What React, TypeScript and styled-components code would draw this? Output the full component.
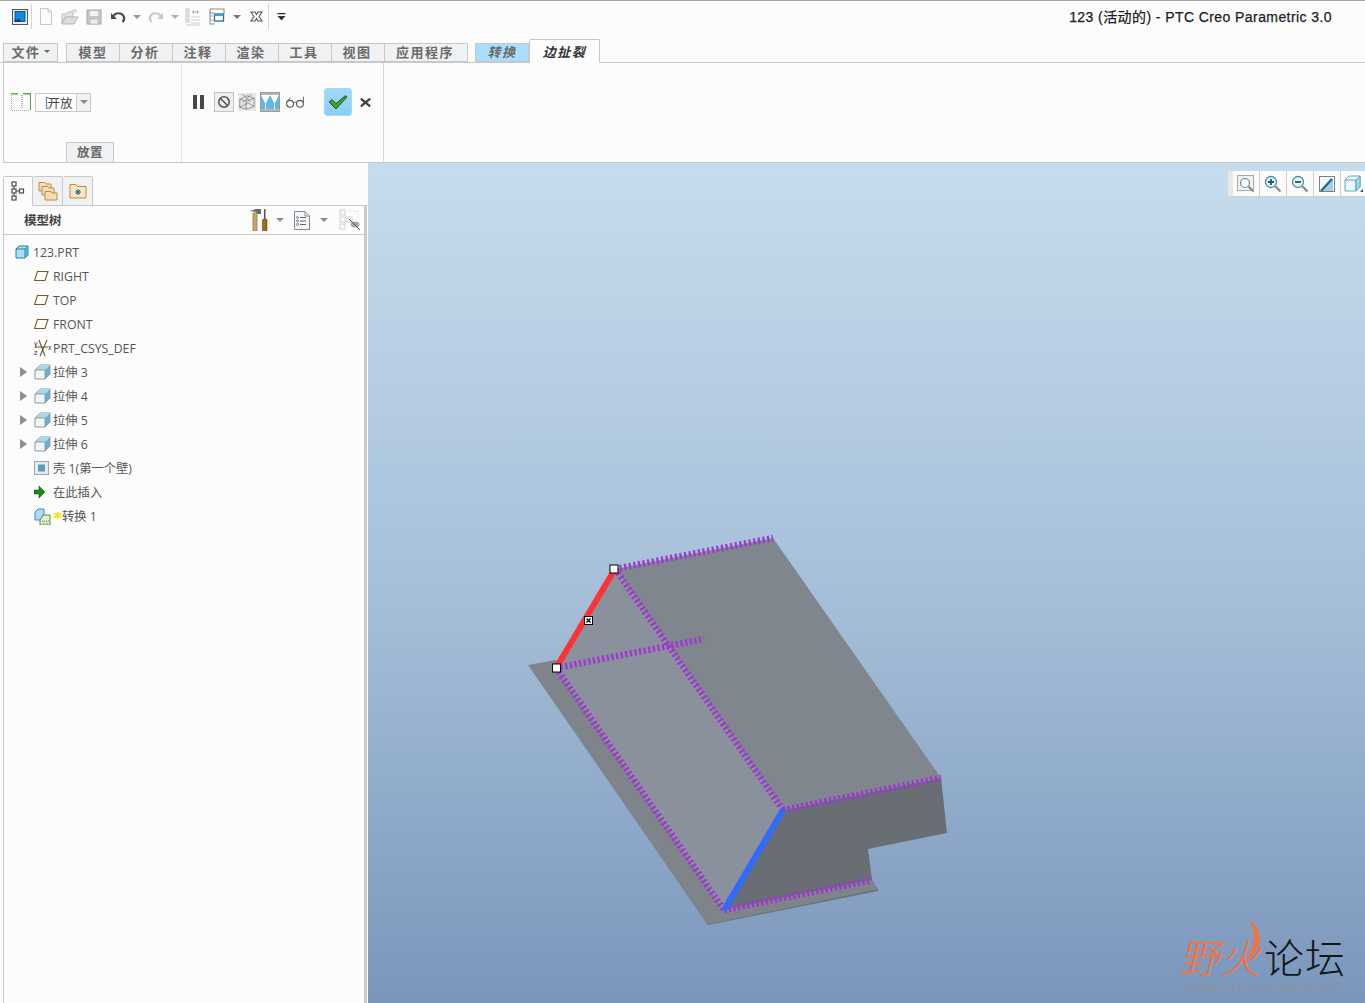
import React from "react";
import styled, { createGlobalStyle } from "styled-components";

const CJK = `"Liberation Sans", "Noto Sans CJK SC", sans-serif`;
const TREE = `"Open Sans", "Noto Sans CJK SC", sans-serif`;

const GlobalStyle = createGlobalStyle`
  html, body { margin: 0; padding: 0; background: #fcfcfc; }
  * { box-sizing: border-box; }
`;

const Page = styled.div`
  width: 1365px;
  height: 1003px;
  overflow: hidden;
  display: flex;
  flex-direction: column;
  background: #fcfcfc;
  font-family: ${CJK};
`;

/* quick access bar */
const QuickBar = styled.div`
  height: 43px;
  flex: none;
  border-top: 1px solid #a4a4a4;
  padding: 3px 33px 14px 8px;
  display: flex;
  align-items: center;
`;
const Slot = styled.div<{ $w: number }>`
  width: ${(p) => p.$w}px;
  height: 25px;
  flex: none;
  display: flex;
  align-items: center;
  justify-content: center;
`;
const BarSep = styled.div`
  width: 1px;
  height: 25px;
  flex: none;
  background: #d4d4d4;
`;
const Title = styled.div`
  margin-left: auto;
  padding-bottom: 2px;
  font-size: 14px;
  letter-spacing: 0.42px;
  color: #1c1c1c;
  -webkit-text-stroke: 0.25px #1c1c1c;
  white-space: nowrap;
`;
const Caret = styled.span<{ $c?: string; $s?: number }>`
  display: block;
  width: 0;
  height: 0;
  border-left: ${(p) => p.$s ?? 4}px solid transparent;
  border-right: ${(p) => p.$s ?? 4}px solid transparent;
  border-top: ${(p) => p.$s ?? 4}px solid ${(p) => p.$c ?? "#9a9a9a"};
`;

/* ribbon tabs */
const TabRow = styled.div`
  height: 20px;
  flex: none;
  display: flex;
  align-items: flex-end;
  padding-left: 3px;
  border-bottom: 1px solid #c8c8c8;
`;
const Tab = styled.div<{ $w: number; $gap?: number; $kind?: "blue" | "active"; $first?: boolean }>`
  width: ${(p) => p.$w}px;
  height: ${(p) => (p.$kind === "active" ? 24 : 19)}px;
  flex: none;
  margin-left: ${(p) => p.$gap ?? 0}px;
  margin-bottom: ${(p) => (p.$kind === "active" ? -1 : 0)}px;
  padding-bottom: ${(p) => (p.$kind === "active" ? 0 : 2)}px;
  padding-right: ${(p) => (p.$gap || p.$first || p.$kind ? 0 : 2)}px;
  position: relative;
  display: flex;
  align-items: center;
  justify-content: center;
  gap: 3px;
  font-size: 13px;
  font-weight: 700;
  letter-spacing: 1.5px;
  font-style: ${(p) => (p.$kind ? "italic" : "normal")};
  color: ${(p) => (p.$kind === "active" ? "#333" : "#6a6a6a")};
  background: ${(p) =>
    p.$kind === "active" ? "#fdfdfd" : p.$kind === "blue" ? "#a9deff" : "#eff1f3"};
  border: 1px solid #c8c8c8;
  border-bottom: ${(p) => (p.$kind === "active" ? "none" : "1px solid #c8c8c8")};
  border-left-width: ${(p) => (p.$gap || p.$first || p.$kind === "active" ? 1 : 0)}px;
  border-radius: ${(p) => (p.$kind === "active" ? "2px 2px 0 0" : "0")};
`;

/* ribbon */
const Ribbon = styled.div`
  height: 100px;
  flex: none;
  margin-left: 3px;
  display: flex;
  border-left: 1px solid #c8c8c8;
  border-bottom: 1px solid #c8c8c8;
`;
const Group = styled.div<{ $w: number; $pad: number; $rule?: boolean }>`
  width: ${(p) => p.$w}px;
  flex: none;
  padding: 25px 0 0 ${(p) => p.$pad}px;
  display: flex;
  flex-direction: column;
  border-right: 1px solid ${(p) => (p.$rule ? "#d6d6d6" : "#e4e4e4")};
`;
const GroupRow = styled.div`
  height: 28px;
  display: flex;
  align-items: center;
`;
const Combo = styled.div`
  width: 56px;
  height: 19px;
  margin-left: 4px;
  display: flex;
  border: 1px solid #c8c8c8;
  background: #fff;
`;
const ComboText = styled.div`
  flex: 1;
  display: flex;
  align-items: center;
  padding-left: 9px;
  font-size: 12.5px;
  color: #444;
  font-weight: 400;
  white-space: nowrap;
`;
const ComboBracket = styled.span`
  color: #5a7a96;
  margin-right: -1px;
`;
const ComboArrow = styled.div`
  width: 14px;
  display: flex;
  align-items: center;
  justify-content: center;
  background: #eff1f3;
  border-left: 1px solid #c8c8c8;
`;
const PlaceTab = styled.div`
  width: 48px;
  height: 20px;
  margin: auto 0 0 55px;
  padding-bottom: 2px;
  display: flex;
  align-items: center;
  justify-content: center;
  font-size: 12.5px;
  font-weight: 700;
  letter-spacing: 0.5px;
  color: #666;
  background: #eff1f3;
  border: 1px solid #c8c8c8;
  border-bottom: none;
`;
const ToolBtn = styled.div<{ $w?: number; $gap?: number; $state?: "boxed" | "on" }>`
  width: ${(p) => p.$w ?? 20}px;
  height: 20px;
  margin-left: ${(p) => p.$gap ?? 3}px;
  flex: none;
  display: flex;
  align-items: center;
  justify-content: center;
  background: ${(p) => (p.$state === "on" ? "#b4b4b4" : p.$state === "boxed" ? "#efefef" : "transparent")};
  border: 1px solid ${(p) => (p.$state === "on" ? "#9c9c9c" : p.$state === "boxed" ? "#c4c4c4" : "transparent")};
`;
const PauseBar = styled.div`
  display: flex;
  gap: 3px;
  width: 11px;
  height: 14px;
  flex: none;
  &::before,
  &::after {
    content: "";
    width: 4px;
    background: #474747;
  }
`;
const ConfirmBtn = styled.div`
  width: 28px;
  height: 28px;
  margin-left: 19px;
  flex: none;
  display: flex;
  align-items: center;
  justify-content: center;
  background: linear-gradient(#a2d9fb, #8bcdf8);
  border: 1px solid #a9d8f5;
  border-radius: 3px;
`;

/* main area */
const Body = styled.div`
  flex: 1;
  min-height: 0;
  display: flex;
`;
const Side = styled.div`
  width: 368px;
  flex: none;
  padding-left: 3px;
  padding-right: 1px;
  display: flex;
  flex-direction: column;
`;
const SideTabs = styled.div`
  height: 43px;
  flex: none;
  display: flex;
  align-items: flex-end;
  margin-bottom: -1px;
`;
const SideTab = styled.div<{ $active?: boolean }>`
  width: 30px;
  height: 30px;
  display: flex;
  align-items: center;
  justify-content: center;
  position: relative;
  z-index: ${(p) => (p.$active ? 1 : 0)};
  background: ${(p) => (p.$active ? "#fdfdfd" : "#eff1f3")};
  border: 1px solid #c8c8c8;
  border-left-width: ${(p) => (p.$active ? 1 : 0)}px;
  border-bottom-color: ${(p) => (p.$active ? "#fdfdfd" : "#c8c8c8")};
  border-radius: 2px 2px 0 0;
`;
const TreePanel = styled.div`
  flex: 1;
  display: flex;
  flex-direction: column;
  border-left: 1px solid #c8c8c8;
  border-right: 3px solid #cacaca;
  border-top: 1px solid #c8c8c8;
`;
const TreeHeader = styled.div`
  height: 29px;
  flex: none;
  display: flex;
  align-items: center;
  padding: 0 0 0 20px;
  border-bottom: 1px solid #c8c8c8;
`;
const TreeTitle = styled.div`
  font-size: 12.5px;
  font-weight: 700;
  color: #444;
  margin-right: auto;
  padding-bottom: 2px;
`;
const HeaderTool = styled.div<{ $w: number }>`
  width: ${(p) => p.$w}px;
  height: 24px;
  flex: none;
  display: flex;
  align-items: center;
  justify-content: center;
`;
const TreeList = styled.div`
  padding-top: 5px;
  display: flex;
  flex-direction: column;
`;
const Row = styled.div<{ $indent: number }>`
  height: 24px;
  display: flex;
  align-items: center;
  padding-left: ${(p) => p.$indent}px;
  font-family: ${TREE};
  font-size: 12.3px;
  color: #555;
  white-space: nowrap;
`;
const Expander = styled.div<{ $show: boolean }>`
  width: 14px;
  flex: none;
  &::before {
    content: "";
    display: ${(p) => (p.$show ? "block" : "none")};
    width: 0;
    height: 0;
    border-top: 5px solid transparent;
    border-bottom: 5px solid transparent;
    border-left: 7px solid #8e8e8e;
  }
`;
const RowIcon = styled.div<{ $w: number }>`
  width: ${(p) => p.$w}px;
  height: 18px;
  flex: none;
  display: flex;
  align-items: center;
`;

/* graphics window */
const Viewport = styled.div`
  flex: 1;
  position: relative;
  overflow: hidden;
  background: linear-gradient(#c7dcec 0%, #a7c0da 50%, #7b96bc 100%);
`;
const ModelSvg = styled.svg`
  display: block;
  width: 100%;
  height: 100%;
`;
const ViewTools = styled.div`
  position: absolute;
  top: 8px;
  left: 860px;
  height: 26px;
  display: flex;
  background: #fbfbfb;
  border-left: 5px solid #e8e8e8;
  border-bottom: 1px solid #cfcfcf;
`;
const ViewTool = styled.div`
  width: 27px;
  display: flex;
  align-items: center;
  justify-content: center;
  border-right: 1px solid #cfcfcf;
`;
const Mark = styled.div`
  position: absolute;
  left: 811px;
  top: 770px;
  width: 178px;
`;
const MarkTitle = styled.div`
  display: flex;
  font-family: "Noto Sans CJK SC", sans-serif;
  font-size: 40px;
  line-height: 46px;
  font-weight: 300;
  height: 46px;
`;
const MarkHot = styled.span`
  color: #f8703a;
  font-style: italic;
  font-weight: 300;
  letter-spacing: 1px;
  margin-right: 3px;
`;
const MarkCool = styled.span`
  color: #151515;
  font-weight: 300;
  letter-spacing: 1px;
`;
const MarkUrl = styled.div`
  font-size: 14.6px;
  font-style: italic;
  letter-spacing: 1.5px;
  color: #8c93a0;
  white-space: nowrap;
  padding-left: 3px;
`;
const Flame = styled.svg`
  position: absolute;
  left: 61px;
  top: -15px;
`;

/* icons */
const Ic = ({ w = 16, h = 16, children }: { w?: number; h?: number; children: React.ReactNode }) => (
  <svg width={w} height={h} viewBox={`0 0 ${w} ${h}`} fill="none">
    {children}
  </svg>
);

const AppIcon = () => (
  <Ic>
    <rect x="0.5" y="0.5" width="15" height="15" fill="#ececec" stroke="#555" />
    <rect x="3" y="2.500" width="10" height="10" fill="#0a8ae0" stroke="#0c3f66" strokeWidth="0.800" />
    <rect x="2.500" y="10.500" width="6" height="2.500" fill="#123f60" />
  </Ic>
);
const NewIcon = () => (
  <Ic h={17}>
    <path d="M2.5 .5H10L13.5 4V16.5H2.5Z" fill="#fbfbfb" stroke="#c8c8c8" />
    <path d="M10 .5V4H13.5" stroke="#c8c8c8" />
  </Ic>
);
const OpenIcon = () => (
  <Ic w={18}>
    <path d="M1 5H6L7 3H12V8H4L1 15Z" fill="#e6e6e6" stroke="#bdbdbd" />
    <path d="M1 15L4 8H17L13 15Z" fill="#dcdcdc" stroke="#b8b8b8" />
    <path d="M10 3C11 1 13 1 15 2M15 2L13 .5M15 2L13.5 4" stroke="#bcbcbc" />
  </Ic>
);
const SaveIcon = () => (
  <Ic>
    <rect x="1" y="1" width="14" height="14" fill="#c8c8c8" stroke="#a8a8a8" />
    <rect x="4" y="2" width="8" height="5" fill="#f2f2f2" />
    <rect x="4" y="10" width="8" height="5" fill="#eee" stroke="#a8a8a8" strokeWidth="0.6" />
  </Ic>
);
const UndoIcon = () => (
  <Ic>
    <path d="M3 8C5 3 12 3 14 8C14.5 10 13.5 12 12.5 13" stroke="#4a4a4a" strokeWidth="2.2" />
    <path d="M1 4V10H7Z" fill="#4a4a4a" />
  </Ic>
);
const RedoIcon = () => (
  <Ic>
    <path d="M13 8C11 3 4 3 2 8C1.500 10 2.500 12 3.500 13" stroke="#c8c8c8" strokeWidth="2.2" />
    <path d="M15 4V10H9Z" fill="#c8c8c8" />
  </Ic>
);
const RegenIcon = () => (
  <Ic h={18}>
    <g stroke="#c4c4c4" fill="#f4f4f4">
      <rect x="1" y="1" width="3" height="3" />
      <rect x="1" y="6" width="3" height="3" />
      <rect x="1" y="11" width="3" height="3" />
    </g>
    <path d="M6 12H15M6 15H15M1 17H15M6 9H15" stroke="#cfcfcf" />
    <path d="M7 4L9 2V6ZM14 4L12 2V6Z" fill="#a6a6a6" />
    <path d="M9 4H12" stroke="#a6a6a6" />
  </Ic>
);
const WindowsIcon = () => (
  <Ic h={17}>
    <path d="M1 1H15V6M1 1V16H6M1 5H5" stroke="#8c8c8c" strokeWidth="1.1" />
    <rect x="5.500" y="6" width="9" height="7" fill="#fff" stroke="#2a6a94" strokeWidth="1.300" />
    <path d="M5.500 7H14.500" stroke="#4aa0d4" strokeWidth="2" />
    <path d="M2 8H4M2 12H4" stroke="#9a9a9a" />
  </Ic>
);
const CloseWinIcon = () => (
  <Ic w={13} h={11}>
    <path d="M1 1H5L6.500 3.500L8 1H12L9 5.500L12 10H8L6.500 7.500L5 10H1L4 5.500Z" fill="#fff" stroke="#555" strokeWidth="1.100" />
  </Ic>
);
const MoreIcon = () => (
  <Ic w={9} h={8}>
    <rect x="0.500" y="0" width="8" height="1.300" fill="#333" />
    <path d="M0.500 3H8.500L4.500 7.500Z" fill="#333" />
  </Ic>
);
const SheetIcon = () => (
  <Ic w={20} h={18}>
    <path d="M.5 2V17.500H19" stroke="#aaa" strokeDasharray="1 1" />
    <path d="M0 .7H7M12 .7H20" stroke="#5fae4a" strokeWidth="1.400" />
    <path d="M19.500 0V17" stroke="#5fae4a" strokeWidth="1.200" />
    <path d="M11 2V16" stroke="#4e8aa6" strokeDasharray="1 1" />
  </Ic>
);
const BanIcon = () => (
  <Ic w={14} h={14}>
    <circle cx="7" cy="7" r="5.200" stroke="#555" strokeWidth="1.600" />
    <path d="M3.500 3.500L10.500 10.500" stroke="#555" strokeWidth="1.600" />
  </Ic>
);
const WireIcon = () => (
  <Ic w={20} h={20}>
    <rect x="0" y="0" width="20" height="20" fill="#e6e6e6" />
    <path d="M2 7L9 9V18L2 16ZM9 9L18 6V15L9 18M2 7L10 3L18 6M5 1L14 10M15 1L5 11M2 16L11 11L18 15" stroke="#777" strokeWidth="0.800" />
  </Ic>
);
const FoldIcon = () => (
  <Ic w={18} h={16}>
    <path d="M0 1H18V14L13 16L9 14L4 16L0 14Z" fill="#62b6e6" />
    <path d="M0 1H9L4.500 10ZM9 1H18L13.500 10Z" fill="#fff" />
    <path d="M4.500 10V16M13.500 10V16" stroke="#e4f4fc" />
  </Ic>
);
const GlassesIcon = () => (
  <Ic w={20} h={14}>
    <circle cx="4.500" cy="9" r="3.800" stroke="#555" strokeWidth="1.200" />
    <circle cx="15.500" cy="9" r="3.800" stroke="#555" strokeWidth="1.200" />
    <path d="M8 8C9 7 11 7 12 8M1 7L5 2M19.300 8V1" stroke="#555" />
  </Ic>
);
const CheckIcon = () => (
  <Ic w={20} h={16}>
    <path d="M1 8L4 5.500L8 9.500L17.500 1.500L19 3L8 15Z" fill="#3fa12f" stroke="#1e4a1c" strokeWidth="0.900" />
  </Ic>
);
const XIcon = () => (
  <Ic w={13} h={11}>
    <path d="M1 1L12 10M12 1L1 10" stroke="#404040" strokeWidth="2.600" />
  </Ic>
);
const NodesIcon = () => (
  <Ic w={14} h={20}>
    <g stroke="#4a4a4a" strokeWidth="1.200" fill="#fff">
      <rect x="1" y="1" width="4" height="4" />
      <rect x="1" y="8" width="4" height="4" />
      <rect x="8.500" y="8" width="4" height="4" />
      <rect x="1" y="15" width="4" height="4" />
    </g>
    <path d="M3 5V8M3 12V15M5 10H8.500" stroke="#4a4a4a" />
  </Ic>
);
const FoldersIcon = () => (
  <Ic w={20} h={20}>
    <g fill="#f3dfb0" stroke="#b48c4c">
      <path d="M1 3V1.500H7L8 3H13V10H1Z" />
      <path d="M4 7V5.500H10L11 7H16V14H4Z" />
      <path d="M7 12V10.500H13L14 12H19V19H7Z" />
    </g>
  </Ic>
);
const WorkFolderIcon = () => (
  <Ic w={18} h={16}>
    <path d="M1 3.500V1.500H7L8.500 3.500H17V15H1Z" fill="#f8e7bd" stroke="#b48c4c" />
    <path d="M9 6V12M6 9H12M7 7L11 11M11 7L7 11" stroke="#14668c" strokeWidth="1" />
  </Ic>
);
const ToolsIcon = () => (
  <Ic w={20} h={22}>
    <path d="M1 2L7 0H12V5H8L7 3Z" fill="#6a6a6a" />
    <rect x="4" y="4" width="4" height="18" rx="0.500" fill="#c6a766" stroke="#8a703c" strokeWidth="0.700" />
    <rect x="15" y="0" width="1.500" height="10" fill="#555" />
    <rect x="13.500" y="10" width="4.500" height="12" rx="1" fill="#a5681e" stroke="#6e4412" strokeWidth="0.600" />
  </Ic>
);
const DocListIcon = () => (
  <Ic w={16} h={19}>
    <path d="M.5 .5H11L15.500 5V18.500H.5Z" fill="#f5f6f7" stroke="#7c8a94" />
    <path d="M11 .5V5H15.500" stroke="#7c8a94" />
    <path d="M6 6.500H12M6 10H12M6 13.500H12" stroke="#5c6870" />
    <g stroke="#5c6870" strokeWidth="0.800">
      <circle cx="3.500" cy="6.500" r="1" />
      <circle cx="3.500" cy="10" r="1" />
      <circle cx="3.500" cy="13.500" r="1" />
    </g>
  </Ic>
);
const TreeEyeIcon = () => (
  <Ic w={22} h={22}>
    <g stroke="#d0d0d0" fill="#fbfbfb">
      <rect x="1" y="1" width="5" height="5" />
      <rect x="1" y="8" width="5" height="5" />
      <rect x="8" y="8" width="5" height="5" />
      <rect x="1" y="15" width="5" height="5" />
    </g>
    <path d="M9 2H13M15 2H19V8" stroke="#dcdcdc" strokeDasharray="2 1" />
    <ellipse cx="16" cy="15.500" rx="4.500" ry="3" fill="#a8a8a8" />
    <path d="M10 10L21 21" stroke="#555" />
  </Ic>
);
const PartIcon = () => (
  <Ic w={14} h={14}>
    <path d="M1 4L4 1H13V10L10 13H1Z" fill="#a8e0f4" stroke="#1e7ea8" />
    <path d="M1 4H10V13M10 4L13 1" stroke="#1e7ea8" />
    <path d="M10 4L13 1V10L10 13Z" fill="#4cb0d8" />
  </Ic>
);
const PlaneIcon = () => (
  <Ic w={15} h={10}>
    <path d="M3.500 .5H14L11 9.500H.5Z" stroke="#7a5c2e" fill="none" strokeWidth="1.100" />
  </Ic>
);
const CsysIcon = () => (
  <svg width="18" height="18" viewBox="0 0 18 18" fill="none">
    <path d="M5 1L11 17M13 1L6 17M1 8H14" stroke="#6a5530" strokeWidth="1.100" />
    <text x="0" y="7" fontSize="7" fontFamily="Liberation Sans" fill="#333">y</text>
    <text x="0" y="16" fontSize="7" fontFamily="Liberation Sans" fill="#333">z</text>
    <text x="14" y="11" fontSize="7" fontFamily="Liberation Sans" fill="#333">x</text>
  </svg>
);
const ExtrudeIcon = () => (
  <Ic w={17} h={16}>
    <path d="M1 6L6 1H16V10L11 15H1Z" fill="#f4f4f4" stroke="#8a9aa4" />
    <path d="M1 6L6 1H16L11 6Z" fill="#a8d8ec" />
    <path d="M11 6L16 1V10L11 15Z" fill="#6eb0cc" />
    <path d="M1 6H11V15" stroke="#8a9aa4" />
  </Ic>
);
const ShellIcon = () => (
  <Ic w={15} h={14}>
    <rect x=".5" y=".5" width="14" height="13" fill="#e8eaec" stroke="#a0a6ac" />
    <rect x="4" y="3.500" width="7" height="7" fill="#5a9cc0" />
  </Ic>
);
const InsertIcon = () => (
  <Ic w={12} h={12}>
    <path d="M0 4H5V0L11 6L5 12V8H0Z" fill="#1a8a1a" stroke="#0e4e0e" strokeWidth="0.500" />
  </Ic>
);
const ConvertIcon = () => (
  <Ic w={17} h={17}>
    <path d="M1 4L4 1H10V12H1Z" fill="#a8dcf4" stroke="#3c90b8" />
    <path d="M6 17V12L9 7H16V17Z" fill="#dff0d0" stroke="#5c8c44" />
    <path d="M8 13H16M10 13V17M13 13V17" stroke="#6aa04c" strokeDasharray="1 1" />
  </Ic>
);
const SparkIcon = () => (
  <svg width="9" height="10" viewBox="0 0 9 10" fill="none">
    <path d="M4.500 1V8M1 2.500L8 6.500M8 2.500L1 6.500" stroke="#f2e600" strokeWidth="1.500" />
  </svg>
);
const FitIcon = () => (
  <Ic w={18} h={18}>
    <rect x=".5" y=".5" width="16" height="15" fill="#f2f2f2" stroke="#a8a8a8" />
    <circle cx="8" cy="8" r="4.500" fill="#f6fbff" stroke="#5c8ea8" strokeWidth="1.200" />
    <path d="M11.500 11.500L16.500 16.500" stroke="#8a8a8a" strokeWidth="2.200" />
  </Ic>
);
const ZoomIcon = ({ plus }: { plus?: boolean }) => (
  <Ic w={18} h={18}>
    <circle cx="7" cy="7" r="5.500" fill="#eef6fb" stroke="#4a8aa8" strokeWidth="1.300" />
    <path d={plus ? "M4 7H10M7 4V10" : "M4 7H10"} stroke="#0e5c84" strokeWidth="1.800" />
    <path d="M11 11L16.500 16.500" stroke="#8a8a8a" strokeWidth="2.200" />
  </Ic>
);
const ViewModeIcon = () => (
  <Ic w={16} h={16}>
    <rect x=".5" y=".5" width="15" height="15" fill="#f4f8fa" stroke="#808080" />
    <path d="M3 15L14 3V15Z" fill="#a8cde0" />
    <path d="M2 15L13 3" stroke="#1f6a98" strokeWidth="2.400" />
  </Ic>
);
const CubeViewIcon = () => (
  <Ic w={20} h={18}>
    <path d="M1 5L5 1H16V12L12 16H1Z" fill="#eef8fc" stroke="#58a8c8" />
    <path d="M12 5L16 1V12L12 16Z" fill="#a8d8ec" stroke="#58a8c8" />
    <path d="M1 5H12V16" stroke="#58a8c8" />
    <path d="M19 14V17H16Z" fill="#444" />
  </Ic>
);

const tabs = [
  { label: "模型", w: 54 },
  { label: "分析", w: 53 },
  { label: "注释", w: 53 },
  { label: "渲染", w: 53 },
  { label: "工具", w: 53 },
  { label: "视图", w: 53 },
  { label: "应用程序", w: 83 },
];

type TreeItem = { label: string; icon: React.ReactNode; arrow?: boolean; spark?: boolean };
const items: TreeItem[] = [
  { label: "RIGHT", icon: <PlaneIcon /> },
  { label: "TOP", icon: <PlaneIcon /> },
  { label: "FRONT", icon: <PlaneIcon /> },
  { label: "PRT_CSYS_DEF", icon: <CsysIcon /> },
  { label: "拉伸 3", icon: <ExtrudeIcon />, arrow: true },
  { label: "拉伸 4", icon: <ExtrudeIcon />, arrow: true },
  { label: "拉伸 5", icon: <ExtrudeIcon />, arrow: true },
  { label: "拉伸 6", icon: <ExtrudeIcon />, arrow: true },
  { label: "壳 1(第一个壁)", icon: <ShellIcon /> },
  { label: "在此插入", icon: <InsertIcon /> },
  { label: "转换 1", icon: <ConvertIcon />, spark: true },
];

const dashed = [
  "M615 569L773 538",
  "M615 569L783 810",
  "M556 668L724 910",
  "M556 668L704 639",
  "M783 810L941 778",
  "M724 910L872 880",
];

const Model = () => (
  <ModelSvg viewBox="368 163 997 840">
    <path d="M528 665L556 660L724 910L872 880L878 889L708 924Z" fill="#7f848a" />
    <path d="M528 665L708 924L878 889L878 891L708 925Z" fill="#6c7177" />
    <path d="M615 569L773 538L941 778L783 810Z" fill="#7f868e" />
    <path d="M556 668L615 569L783 810L724 910Z" fill="#8a919c" />
    <path d="M783 810L941 778L947 833L868 849L872 880L724 910Z" fill="#686e74" />
    {dashed.map((d) => (
      <path key={d} d={d} stroke="#a035d2" strokeWidth="6.500" strokeDasharray="2.200 2.500" />
    ))}
    <path d="M556 668L615 569" stroke="#ff3333" strokeWidth="6" />
    <path d="M783 810L724 910" stroke="#2f6bff" strokeWidth="6" />
    <rect x="610" y="565" width="8" height="8" fill="#fff" stroke="#000" />
    <rect x="552.500" y="664" width="8" height="8" fill="#fff" stroke="#000" />
    <rect x="584.500" y="616.500" width="8" height="8" fill="#fff" stroke="#000" />
    <path d="M586.500 618.500L590.500 622.500M590.500 618.500L586.500 622.500" stroke="#000" strokeWidth="1.300" />
  </ModelSvg>
);

export default function App() {
  return (
    <Page>
      <GlobalStyle />
      <QuickBar>
        <Slot $w={23}><AppIcon /></Slot>
        <BarSep />
        <Slot $w={2} />
        <Slot $w={24}><NewIcon /></Slot>
        <Slot $w={24}><OpenIcon /></Slot>
        <Slot $w={24}><SaveIcon /></Slot>
        <Slot $w={24}><UndoIcon /></Slot>
        <Slot $w={14}><Caret /></Slot>
        <Slot $w={24}><RedoIcon /></Slot>
        <Slot $w={13}><Caret $c="#b0b0b0" /></Slot>
        <Slot $w={24}><RegenIcon /></Slot>
        <Slot $w={24}><WindowsIcon /></Slot>
        <Slot $w={15}><Caret $c="#777" /></Slot>
        <Slot $w={24}><CloseWinIcon /></Slot>
        <BarSep />
        <Slot $w={25}><MoreIcon /></Slot>
        <Title>123 (活动的) - PTC Creo Parametric 3.0</Title>
      </QuickBar>

      <TabRow>
        <Tab $w={55} $first>
          文件<Caret $c="#666" $s={3} />
        </Tab>
        {tabs.map((t, i) => (
          <Tab key={t.label} $w={t.w} $gap={i === 0 ? 8 : 0}>
            {t.label}
          </Tab>
        ))}
        <Tab $w={54} $gap={7} $kind="blue">转换</Tab>
        <Tab $w={71} $kind="active">边扯裂</Tab>
      </TabRow>

      <Ribbon>
        <Group $w={178} $pad={7}>
          <GroupRow>
            <SheetIcon />
            <Combo>
              <ComboText><ComboBracket>[</ComboBracket>开放</ComboText>
              <ComboArrow><Caret $c="#8a8a8a" /></ComboArrow>
            </Combo>
          </GroupRow>
          <PlaceTab>放置</PlaceTab>
        </Group>
        <Group $w={202} $pad={11} $rule>
          <GroupRow>
            <PauseBar />
            <ToolBtn $gap={10} $state="boxed"><BanIcon /></ToolBtn>
            <ToolBtn><WireIcon /></ToolBtn>
            <ToolBtn $state="on"><FoldIcon /></ToolBtn>
            <ToolBtn $gap={5}><GlassesIcon /></ToolBtn>
            <ConfirmBtn><CheckIcon /></ConfirmBtn>
            <ToolBtn $w={13} $gap={7}><XIcon /></ToolBtn>
          </GroupRow>
        </Group>
      </Ribbon>

      <Body>
        <Side>
          <SideTabs>
            <SideTab $active><NodesIcon /></SideTab>
            <SideTab><FoldersIcon /></SideTab>
            <SideTab><WorkFolderIcon /></SideTab>
          </SideTabs>
          <TreePanel>
            <TreeHeader>
              <TreeTitle>模型树</TreeTitle>
              <HeaderTool $w={20}><ToolsIcon /></HeaderTool>
              <HeaderTool $w={22}><Caret $c="#8c8c8c" /></HeaderTool>
              <HeaderTool $w={22}><DocListIcon /></HeaderTool>
              <HeaderTool $w={22}><Caret $c="#8c8c8c" /></HeaderTool>
              <HeaderTool $w={29}><TreeEyeIcon /></HeaderTool>
            </TreeHeader>
            <TreeList>
              <Row $indent={11}>
                <RowIcon $w={18}><PartIcon /></RowIcon>
                123.PRT
              </Row>
              {items.map((it) => (
                <Row key={it.label} $indent={16}>
                  <Expander $show={!!it.arrow} />
                  <RowIcon $w={19}>{it.icon}</RowIcon>
                  {it.spark && <SparkIcon />}
                  {it.label}
                </Row>
              ))}
            </TreeList>
          </TreePanel>
        </Side>

        <Viewport>
          <Model />
          <ViewTools>
            <ViewTool><FitIcon /></ViewTool>
            <ViewTool><ZoomIcon plus /></ViewTool>
            <ViewTool><ZoomIcon /></ViewTool>
            <ViewTool><ViewModeIcon /></ViewTool>
            <ViewTool><CubeViewIcon /></ViewTool>
          </ViewTools>
          <Mark>
            <Flame width="24" height="48" viewBox="0 0 24 48">
              <path d="M9 2C24 12 24 32 3 47C16 30 17 16 9 2Z" fill="#f8703a" />
            </Flame>
            <MarkTitle>
              <MarkHot>野火</MarkHot>
              <MarkCool>论坛</MarkCool>
            </MarkTitle>
            <MarkUrl>www.proewildfire.cn</MarkUrl>
          </Mark>
        </Viewport>
      </Body>
    </Page>
  );
}
